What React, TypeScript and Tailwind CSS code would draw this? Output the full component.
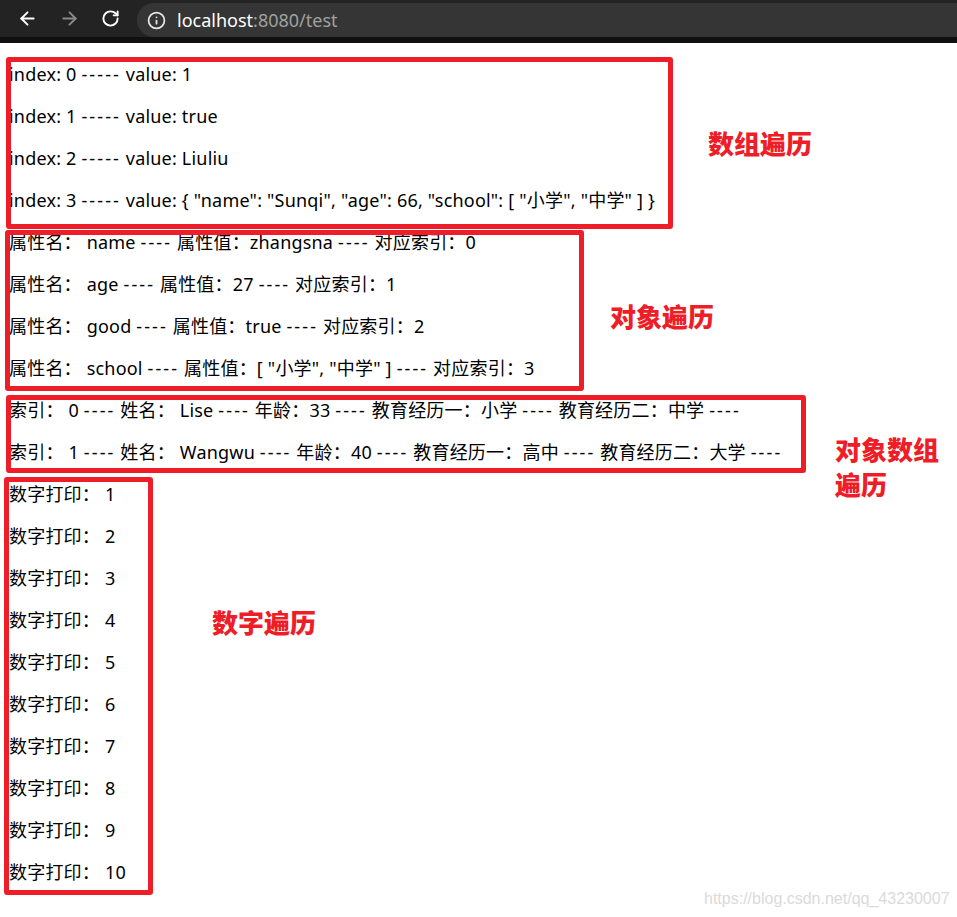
import React from 'react';
import { ArrowLeft, ArrowRight, RotateCw, Info } from 'lucide-react';

const lines: string[] = [
  'index: 0 ----- value: 1',
  'index: 1 ----- value: true',
  'index: 2 ----- value: Liuliu',
  'index: 3 ----- value: { "name": "Sunqi", "age": 66, "school": [ "小学", "中学" ] }',
  '属性名： name ---- 属性值：zhangsna ---- 对应索引：0',
  '属性名： age ---- 属性值：27 ---- 对应索引：1',
  '属性名： good ---- 属性值：true ---- 对应索引：2',
  '属性名： school ---- 属性值：[ "小学", "中学" ] ---- 对应索引：3',
  '索引： 0 ---- 姓名： Lise ---- 年龄：33 ---- 教育经历一：小学 ---- 教育经历二：中学 ----',
  '索引： 1 ---- 姓名： Wangwu ---- 年龄：40 ---- 教育经历一：高中 ---- 教育经历二：大学 ----',
];
for (let i = 1; i <= 10; i++) lines.push(`数字打印： ${i}`);

// the original font draws hyphens wider, so spread the dash runs a little
const renderLine = (t: string) =>
  t.split(/(-+)/).map((part, i) =>
    part.startsWith('-') ? (
      <span key={i} className="tracking-[2.1px]">{part}</span>
    ) : (
      <React.Fragment key={i}>{part}</React.Fragment>
    )
  );

// annotation boxes drawn over the page (screenshot markup)
const Box = ({ className }: { className: string }) => (
  <div className={`absolute border-[5px] border-[#ee1d27] rounded-[3px] pointer-events-none ${className}`} />
);

const Label = ({ className, children }: { className: string; children: React.ReactNode }) => (
  <div
    className={`absolute text-[26px] font-black leading-[35px] text-[#ee1d27] ${className}`}
    style={{ fontFamily: '"Noto Sans CJK SC", sans-serif' }}
  >
    {children}
  </div>
);

export default function App() {
  return (
    <div className="w-[957px] h-[917px] overflow-hidden bg-white relative">
      {/* Browser chrome */}
      <div className="h-[37px] bg-[#232323] flex items-center">
        <div className="flex items-center gap-[21px] pl-[17px] w-[137px]">
          <ArrowLeft size={21} strokeWidth={2.2} className="text-white" />
          <ArrowRight size={21} strokeWidth={2.2} className="text-[#8a8a8a]" />
          <RotateCw size={19} strokeWidth={2.4} className="text-white" />
        </div>
        <div className="flex-1 h-[34px] self-end bg-[#353535] rounded-l-full flex items-center pl-[10px] gap-[11px]">
          <Info size={19} strokeWidth={2.2} className="text-[#e8e8e8]" />
          <span className="text-[18px] leading-none" style={{ fontFamily: '"Noto Sans", sans-serif' }}>
            <span className="text-white">localhost</span>
            <span className="text-[#a0a0a0]">:8080/test</span>
          </span>
        </div>
      </div>
      <div className="h-[6px] bg-[#101010]" />

      {/* Page content */}
      <div
        className="relative pt-[10px] pl-[9px] text-[18px] leading-[42px] tracking-[0.2px] text-black"
        style={{ fontFamily: '"Noto Sans", "Noto Sans CJK SC", sans-serif' }}
      >
        {lines.map((t, i) => (
          <p key={i} className="whitespace-pre">{renderLine(t)}</p>
        ))}
      </div>

      {/* Annotations */}
      <Box className="left-[6px] top-[57px] w-[667px] h-[172px]" />
      <Box className="left-[5px] top-[230px] w-[579px] h-[161px]" />
      <Box className="left-[6px] top-[395px] w-[800px] h-[78px]" />
      <Box className="left-[4px] top-[477px] w-[149px] h-[418px]" />

      <Label className="left-[708px] top-[125px]">数组遍历</Label>
      <Label className="left-[610px] top-[298px]">对象遍历</Label>
      <Label className="left-[835px] top-[431px]">
        对象数组
        <br />
        遍历
      </Label>
      <Label className="left-[212px] top-[604px]">数字遍历</Label>

      <div
        className="absolute left-[704px] top-[890px] text-[16px] leading-[18px] text-[#dadada]"
        style={{ fontFamily: '"Liberation Sans", Arial, sans-serif' }}
      >
        https://blog.csdn.net/qq_43230007
      </div>
    </div>
  );
}
